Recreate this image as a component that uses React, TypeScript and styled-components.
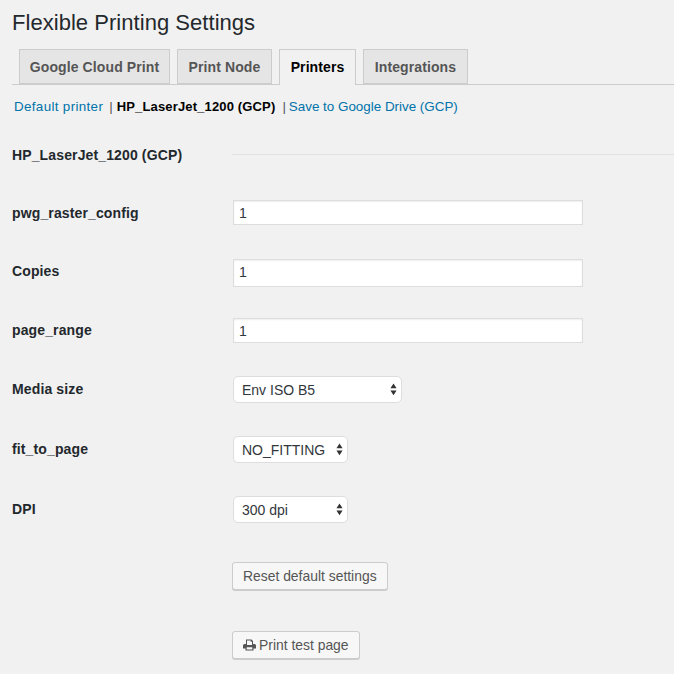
import React from "react";
import styled, { createGlobalStyle } from "styled-components";

const Global = createGlobalStyle`
  html, body { margin: 0; padding: 0; background: #f1f1f1; }
  body { width: 674px; height: 674px; overflow: hidden; font-family: "Liberation Sans", Arial, sans-serif; color: #23282d; }
`;

const Page = styled.div`
  display: flex;
  flex-direction: column;
  padding-left: 12px;
`;

const Title = styled.h1`
  margin: 0;
  padding-top: 8px;
  height: 49px;
  box-sizing: border-box;
  font-size: 22px;
  line-height: 29px;
  font-weight: 400;
  letter-spacing: 0.04px;
  color: #23282d;
`;

const TabBar = styled.div`
  display: flex;
  gap: 7px;
  padding-left: 7px;
  height: 36px;
  box-sizing: border-box;
  border-bottom: 1px solid #ccc;
`;

const Tab = styled.div<{ $active?: boolean; $width: number }>`
  width: ${(p) => p.$width}px;
  height: ${(p) => (p.$active ? 36 : 35)}px;
  box-sizing: border-box;
  border: 1px solid #ccc;
  border-bottom: ${(p) => (p.$active ? "none" : "1px solid #ccc")};
  background: ${(p) => (p.$active ? "#f1f1f1" : "#e5e5e5")};
  color: ${(p) => (p.$active ? "#000" : "#555")};
  font-size: 14px;
  font-weight: 700;
  line-height: 34px;
  letter-spacing: 0.1px;
  text-align: center;
  white-space: nowrap;
`;

const SubNav = styled.div`
  display: flex;
  align-items: center;
  height: 20px;
  margin-top: 11px;
  padding-left: 2px;
  font-size: 13.4px;
  white-space: nowrap;
  color: #555;
`;

const SubLink = styled.a<{ $spread?: number }>`
  color: #0073aa;
  letter-spacing: ${(p) => p.$spread ?? 0}px;
`;

const SubCurrent = styled.span`
  color: #000;
  font-size: 13px;
  font-weight: 700;
  letter-spacing: 0.15px;
`;

const Separator = styled.span<{ $left: number; $right: number }>`
  margin: 0 ${(p) => p.$right}px 0 ${(p) => p.$left}px;
`;

const Form = styled.div`
  display: grid;
  grid-template-columns: 221px 1fr;
  margin-top: 30px;
`;

const Label = styled.div<{ $pad?: number }>`
  padding-top: ${(p) => p.$pad ?? 3}px;
  font-size: 14px;
  font-weight: 700;
  line-height: 18px;
  letter-spacing: 0.13px;
  color: #23282d;
  white-space: nowrap;
`;

const Field = styled.div<{ $height: number }>`
  height: ${(p) => p.$height}px;
`;

const Rule = styled.div`
  height: 1px;
  margin-top: 8px;
  margin-left: -1px;
  background: #e1e1e1;
`;

const TextInput = styled.input<{ $height: number }>`
  display: block;
  width: 350px;
  height: ${(p) => p.$height}px;
  box-sizing: border-box;
  border: 1px solid #ddd;
  box-shadow: inset 0 1px 2px rgba(0, 0, 0, 0.07);
  background: #fff;
  color: #32373c;
  padding: 0 5px ${(p) => (p.$height > 26 ? 2 : 0)}px;
  font: 14px "Liberation Sans", Arial, sans-serif;
  border-radius: 0;
  outline: none;
`;

const SelectBox = styled.div<{ $width: number }>`
  position: relative;
  width: ${(p) => p.$width}px;
  height: 27px;
  box-sizing: border-box;
  border: 1px solid #ddd;
  border-radius: 5px;
  background: #fff;
  color: #32373c;
  font-size: 14px;
  line-height: 26px;
  padding-left: 8px;
  white-space: nowrap;
`;

const Arrows = styled.svg`
  position: absolute;
  right: 4px;
  top: 6px;
`;

const Button = styled.button`
  display: flex;
  align-items: center;
  gap: 3px;
  box-sizing: border-box;
  height: 28px;
  margin-left: -1px;
  padding: 0 10px 1px 10px;
  border: 1px solid #ccc;
  border-radius: 3px;
  background: #f7f7f7;
  box-shadow: 0 1px 0 #ccc;
  color: #555;
  font: 13.9px "Liberation Sans", Arial, sans-serif;
  white-space: nowrap;
`;

const Select = ({ value, width }: { value: string; width: number }) => (
  <SelectBox $width={width}>
    {value}
    <Arrows width="7" height="13" viewBox="0 0 8 14">
      <path d="M4 0 L7.5 5.5 H0.5 Z M0.5 8 H7.5 L4 13.5 Z" fill="#333" />
    </Arrows>
  </SelectBox>
);

const PrinterIcon = () => (
  <svg width="13" height="12" viewBox="0 0 13 12">
    <path
      fill="#555"
      fillRule="evenodd"
      d="M3 0.5 H8.5 L10 2 V5 H11.5 Q13 5 13 6.5 V9.5 H10.5 V11.5 H2.5 V9.5 H0 V6.5 Q0 5 1.5 5 H3 Z M4 1.5 V6 H9 V2.8 H7.7 V1.5 Z M3.7 8.2 V10.4 H9.3 V8.2 Z"
    />
  </svg>
);

export default function App() {
  return (
    <Page>
      <Global />
      <Title>Flexible Printing Settings</Title>
      <TabBar>
        <Tab $width={151}>Google Cloud Print</Tab>
        <Tab $width={95}>Print Node</Tab>
        <Tab $width={77} $active>Printers</Tab>
        <Tab $width={105}>Integrations</Tab>
      </TabBar>
      <SubNav>
        <SubLink $spread={0.34}>Default printer</SubLink>
        <Separator $left={6} $right={4}>|</Separator>
        <SubCurrent>HP_LaserJet_1200 (GCP)</SubCurrent>
        <Separator $left={7} $right={3}>|</Separator>
        <SubLink>Save to Google Drive (GCP)</SubLink>
      </SubNav>
      <Form>
        <Label $pad={0}>HP_LaserJet_1200 (GCP)</Label>
        <Field $height={54}><Rule /></Field>
        <Label $pad={4}>pwg_raster_config</Label>
        <Field $height={59}><TextInput $height={25} defaultValue="1" /></Field>
        <Label>Copies</Label>
        <Field $height={59}><TextInput $height={28} defaultValue="1" /></Field>
        <Label>page_range</Label>
        <Field $height={58}><TextInput $height={25} defaultValue="1" /></Field>
        <Label $pad={4}>Media size</Label>
        <Field $height={60}><Select value="Env ISO B5" width={169} /></Field>
        <Label $pad={4}>fit_to_page</Label>
        <Field $height={60}><Select value="NO_FITTING" width={115} /></Field>
        <Label $pad={4}>DPI</Label>
        <Field $height={66}><Select value="300 dpi" width={115} /></Field>
        <Label />
        <Field $height={69}><Button>Reset default settings</Button></Field>
        <Label />
        <Field $height={28}><Button><PrinterIcon />Print test page</Button></Field>
      </Form>
    </Page>
  );
}
